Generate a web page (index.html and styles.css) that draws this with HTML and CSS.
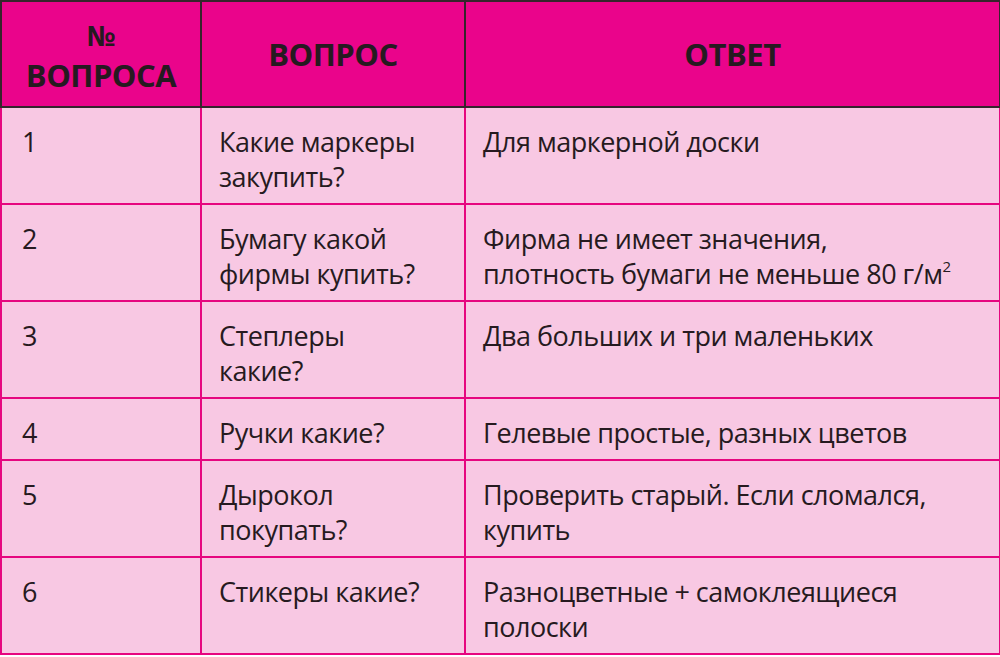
FILE: index.html
```html
<!DOCTYPE html>
<html lang="ru">
<head>
<meta charset="utf-8">
<title>Вопросы и ответы</title>
<link rel="stylesheet" href="styles.css">
</head>
<body>
<table class="qa">
  <colgroup>
    <col class="c-num">
    <col class="c-q">
    <col class="c-a">
  </colgroup>
  <thead>
    <tr class="head">
      <th class="h-num"><span class="no">№</span><br>ВОПРОСА</th>
      <th>ВОПРОС</th>
      <th>ОТВЕТ</th>
    </tr>
  </thead>
  <tbody>
    <tr class="r2"><td>1</td><td>Какие маркеры<br>закупить?</td><td>Для маркерной доски</td></tr>
    <tr class="r2"><td>2</td><td>Бумагу какой<br>фирмы купить?</td><td>Фирма не имеет значения,<br>плотность бумаги не меньше 80 г/м<sup>2</sup></td></tr>
    <tr class="r2"><td>3</td><td>Степлеры<br>какие?</td><td>Два больших и три маленьких</td></tr>
    <tr class="r1"><td>4</td><td>Ручки какие?</td><td>Гелевые простые, разных цветов</td></tr>
    <tr class="r2"><td>5</td><td>Дырокол<br>покупать?</td><td>Проверить старый. Если сломался,<br>купить</td></tr>
    <tr class="r2"><td>6</td><td>Стикеры какие?</td><td>Разноцветные + самоклеящиеся<br>полоски</td></tr>
  </tbody>
</table>
</body>
</html>
```

FILE: styles.css
```css
html, body {
  margin: 0;
  padding: 0;
  background: #ffffff;
}

.qa {
  border-collapse: collapse;
  width: 999px;
  table-layout: fixed;
  font-family: "Open Sans", "Noto Sans", sans-serif;
  color: #261a20;
}

.c-num { width: 200px; }
.c-q { width: 264px; }
.c-a { width: 535px; }

.head th {
  background: #ea048b;
  border: 2px solid #35252c;
  height: 104px;
  padding: 0;
  font-weight: 700;
  font-size: 31px;
  line-height: 40px;
  text-align: center;
  vertical-align: middle;
  letter-spacing: -0.5px;
}

.head .no {
  font-size: 28px;
}

.qa td {
  background: #f8c8e3;
  border: 2px solid #e6067f;
  vertical-align: top;
  font-size: 27px;
  line-height: 35px;
  padding: 16px 14px 9px 17px;
  letter-spacing: -0.5px;
}

.qa td:first-child {
  padding-left: 20px;
}

.r2 td { height: 70px; }
.r1 td { height: 35px; }

.qa sup {
  font-size: 15px;
  line-height: 0;
  vertical-align: 12px;
}
```
